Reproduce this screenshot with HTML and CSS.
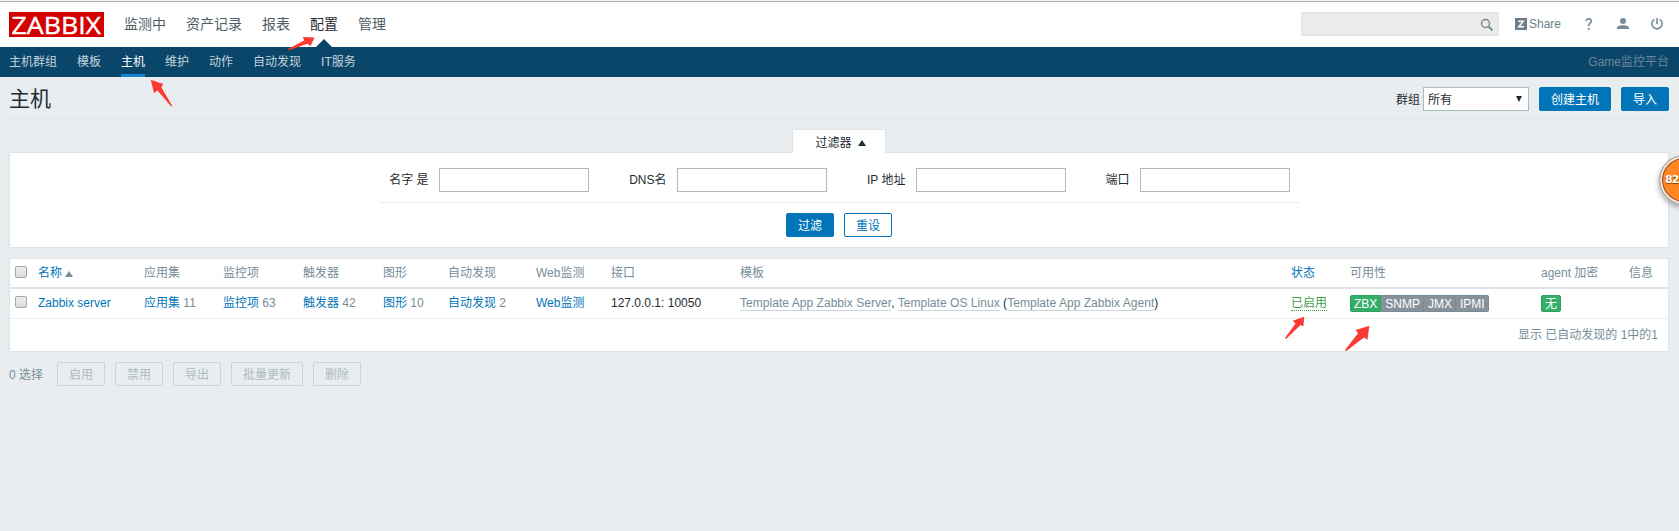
FILE: index.html
```html
<!DOCTYPE html>
<html lang="zh-CN">
<head>
<meta charset="utf-8">
<title>主机</title>
<link rel="stylesheet" href="styles.css">
</head>
<body>
<header class="top">
  <div class="logo"><svg width="95" height="25"><text x="2.500" y="21.500" textLength="89.500" lengthAdjust="spacingAndGlyphs">ZABBIX</text></svg></div>
  <nav class="main-nav"><a>监测中</a><a>资产记录</a><a>报表</a><a class="on">配置</a><a>管理</a></nav>
  <div class="search"><svg width="14" height="14" fill="none" stroke="#768d99"><circle cx="5.500" cy="5.500" r="4" stroke-width="1.500"/><path d="M8.500 8.500l4 4" stroke-width="2"/></svg></div>
  <a class="share"><svg width="12" height="12"><path fill="#6b7f89" d="M0 0h12v12H0z"/><path d="M3.200 3.300h5L3.900 8.700h5" fill="none" stroke="#fff" stroke-width="1.500"/></svg>Share</a>
  <svg class="help" width="8" height="12" fill="none" stroke="#768d99" stroke-width="1.700"><path d="M1.200 3.300C1.200 1.600 2.300.9 3.800.9c1.600 0 2.600.9 2.600 2.300C6.400 5 3.700 5.300 3.700 7.600v.7M3.700 10v1.900"/></svg>
  <svg class="user" width="12" height="12" fill="#768d99"><circle cx="6" cy="3" r="3"/><path d="M0 11V9.800C0 8 3 7.300 6 7.300S12 8 12 9.800V11z"/></svg>
  <svg class="power" width="12" height="12" fill="none" stroke="#768d99" stroke-width="1.600"><path d="M3.300 1.400A5.100 5.100 0 1 0 8.700 1.400M6 0v6"/></svg>
</header>
<nav class="sub"><a>主机群组</a><a>模板</a><a class="on">主机</a><a>维护</a><a>动作</a><a>自动发现</a><a>IT服务</a><span class="server">Game监控平台</span></nav>
<main>
  <div class="title">
    <h1>主机</h1>
    <label>群组</label>
    <div class="select">所有<svg width="6" height="6"><path d="M0 0h6L3 6z" fill="#1f2c33"/></svg></div>
    <button class="btn create">创建主机</button><button class="btn">导入</button>
  </div>
  <div class="tab-row"><div class="tab">过滤器<svg width="8" height="6"><path d="M4 0l4 6H0z" fill="#1f2c33"/></svg></div></div>
  <section class="filter">
    <div class="fields">
      <label>名字 是</label><input><label>DNS名</label><input><label>IP 地址</label><input><label>端口</label><input>
    </div>
    <div class="actions"><button class="btn">过滤</button><button class="btn alt">重设</button></div>
  </section>
  <section class="list">
    <div class="row head"><i class="check"></i><a>名称<svg class="sort" width="8" height="6"><path d="M4 0l4 6H0z" fill="#768d99"/></svg></a><span>应用集</span><span>监控项</span><span>触发器</span><span>图形</span><span>自动发现</span><span>Web监测</span><span>接口</span><span>模板</span><a>状态</a><span>可用性</span><span>agent 加密</span><span>信息</span></div>
    <div class="row"><i class="check"></i><a>Zabbix server</a><span><a>应用集</a> 11</span><span><a>监控项</a> 63</span><span><a>触发器</a> 42</span><span><a>图形</a> 10</span><span><a>自动发现</a> 2</span><a>Web监测</a><span class="dark">127.0.0.1: 10050</span><span class="dark templates"><u>Template App Zabbix Server</u>, <u>Template OS Linux</u> (<u>Template App Zabbix Agent</u>)</span><span><b class="enabled">已启用</b></span><div class="badges"><b class="green">ZBX</b><b>SNMP</b><b>JMX</b><b>IPMI</b></div><div class="badges none"><b class="green">无</b></div></div>
    <div class="total">显示 已自动发现的 1中的1</div>
  </section>
  <div class="bulk"><span>0 选择</span><button>启用</button><button>禁用</button><button>导出</button><button>批量更新</button><button>删除</button></div>
</main>
<svg class="marks" width="1679" height="531" fill="#fb3b33">
  <path d="M288 49L304 40.500 303 37 314.500 37.500 310.500 46 307.500 43.700 289 50.300z"/>
  <path d="M150.700 79.700L163.300 84 161.300 87.300 172.300 106 171 106.300 157.500 90.500 154 93z"/>
  <path d="M1304.300 316.700L1303.300 326.500 1300.500 325 1286 339 1285 338 1295.500 323.500 1292.700 320.700z"/>
  <path d="M1369.300 325.700L1367.500 339.700 1364 337.500 1346 351.200 1345 350 1358 333.300 1355.700 330z"/>
</svg>
<div class="ball">82</div>
</body>
</html>
```
FILE: styles.css
```css
* { box-sizing: border-box; }
body { margin: 0; height: 531px; overflow: hidden; position: relative; background: #e9edf0; color: #1f2c33; font: 12px/18px "Liberation Sans", "Noto Sans CJK SC", sans-serif; }
svg { display: block; flex: none; }
a { color: #0275b8; }
.top { height: 47px; background: #fff; border-top: 1px solid #f1f3f3; box-shadow: inset 0 1px #abb0b0; display: flex; align-items: flex-start; padding: 11px 16px 0 9px; }
.logo { width: 95px; height: 25px; background: #d40000; }
.logo text { font: 24px "Open Sans", "DejaVu Sans", sans-serif; fill: #fff; stroke: #fff; stroke-width: .4px; }
.main-nav { display: flex; gap: 20px; margin-left: 20px; font-size: 14px; line-height: 24px; height: 35px; }
.main-nav a { color: #4f5d65; }
.main-nav .on { color: #1f2c33; position: relative; }
.main-nav .on::after { content: ""; position: absolute; left: 6px; bottom: 0; border: 8px solid transparent; border-top: 0; border-bottom-color: #0a466a; }
.search { margin-left: auto; width: 198px; height: 24px; background: #ebebeb; border: 1px solid #dfe4e7; display: flex; justify-content: flex-end; padding: 5px 4px 0 0; }
.share { display: flex; align-items: center; gap: 2px; margin-left: 16px; width: 46px; height: 24px; color: #6b7f89; }
.help { margin: 6px 0 0 24px; }
.user { margin: 6px 0 0 24px; }
.power { margin: 6px 0 0 22px; }
.sub { height: 30px; background: #0a466a; display: flex; gap: 20px; padding: 0 10px 0 9px; line-height: 31px; }
.sub a { color: #c5d3dc; }
.sub .on { color: #fff; border-bottom: 3px solid #1683cf; height: 30px; }
.server { margin-left: auto; color: #6c8797; }
main { padding: 0 10px 0 9px; }
.title { height: 42px; display: flex; align-items: flex-start; border-bottom: 1px solid #dfe4e7; padding-top: 10px; }
h1 { font-size: 21px; line-height: 30px; font-weight: 400; margin: -3px auto 0 0; }
.title label { margin-right: 3px; line-height: 27px; }
.select { width: 106px; height: 24px; margin-right: 10px; background: #fff; border: 1px solid #acbbc2; padding: 0 6px 0 4px; display: flex; justify-content: space-between; line-height: 25px; }
.select svg { margin-top: 8px; }
.btn { width: 48px; height: 24px; border: 1px solid #0275b8; border-radius: 2px; background: #0275b8; color: #fff; font: inherit; padding: 2px 0 0; }
.create { width: 72px; margin-right: 10px; }
.alt { background: #fff; color: #0275b8; }
.tab-row { display: flex; justify-content: center; padding-top: 10px; }
.tab { width: 94px; height: 24px; background: #fff; border: 1px solid #dfe4e7; border-bottom: 0; display: flex; justify-content: center; align-items: center; gap: 6px; position: relative; z-index: 1; margin-bottom: -1px; padding: 2px 0 0 3px; }
.filter { height: 96px; background: #fff; border: 1px solid #dfe4e7; padding-top: 15px; }
.fields { width: 921px; height: 35px; margin: 0 auto; border-bottom: 1px solid #ebeef0; display: grid; grid-template-columns: 60px 150px 88px 150px 89px 150px 74px 150px; }
.fields label { text-align: right; padding-right: 10px; line-height: 25px; }
.fields input { width: 150px; height: 24px; border: 1px solid #acbbc2; background: #fff; }
.actions { display: flex; justify-content: center; gap: 10px; padding-top: 10px; }
.list { margin-top: 10px; height: 94px; background: #fff; border: 1px solid #dfe4e7; color: #768d99; }
.row { height: 30px; border-bottom: 1px solid #ebeef0; display: grid; grid-template-columns: 23px 106px 79px 80px 80px 65px 88px 75px 129px 551px 59px 191px 88px 1fr; padding-left: 5px; line-height: 29px; white-space: nowrap; }
.head { border-bottom: 2px solid #dfe4e7; }
.check { width: 12px; height: 12px; margin-top: 7px; border: 1px solid #a6a6a6; border-radius: 2px; background: linear-gradient(#ededed, #dcdcdc); }
.sort { display: inline-block; margin-left: 3px; }
.dark { color: #1f2c33; }
.templates { letter-spacing: .04px; }
.dark u { color: #768d99; text-decoration: none; border-bottom: 1px solid #ccd5d9; }
.enabled { font-weight: 400; color: #429e47; border-bottom: 1px dotted #429e47; }
.badges { display: flex; padding-top: 6px; }
.badges b { font-weight: 400; height: 17px; color: #fff; background: #87929b; border: 1px solid #768d99; border-left-width: 0; padding: 0 3px 0 4px; line-height: 16px; }
.badges .green { background: #34af67; border: 1px solid #2f9f5e; border-radius: 2px 0 0 2px; padding: 0 3px; }
.badges b:last-child { border-radius: 0 2px 2px 0; }
.none .green:last-child { border-radius: 2px; }
.total { text-align: right; padding-right: 10px; line-height: 33px; }
.bulk { display: flex; padding-top: 10px; gap: 10px; color: #768d99; line-height: 26px; }
.bulk span { width: 38px; }
.bulk button { height: 24px; padding: 1px 11px 0; font: inherit; line-height: 22px; color: #acbbc2; background: transparent; border: 1px solid #ccd5d9; border-radius: 2px; }
.marks { position: absolute; left: 0; top: 0; pointer-events: none; }
.ball { position: absolute; left: 1659px; top: 155px; width: 50px; height: 50px; border-radius: 50%; border: 1px solid #aaaeb0; background: #ff8721; box-shadow: inset 0 0 0 2px #e9e9e9, inset 0 0 0 3px #a84713, -1px 3px 5px #0004; color: #fff; font: bold 11px/48px "DejaVu Sans", sans-serif; letter-spacing: -.8px; padding-left: 5px; text-shadow: 0 1px 1px #8a3908; }
```
